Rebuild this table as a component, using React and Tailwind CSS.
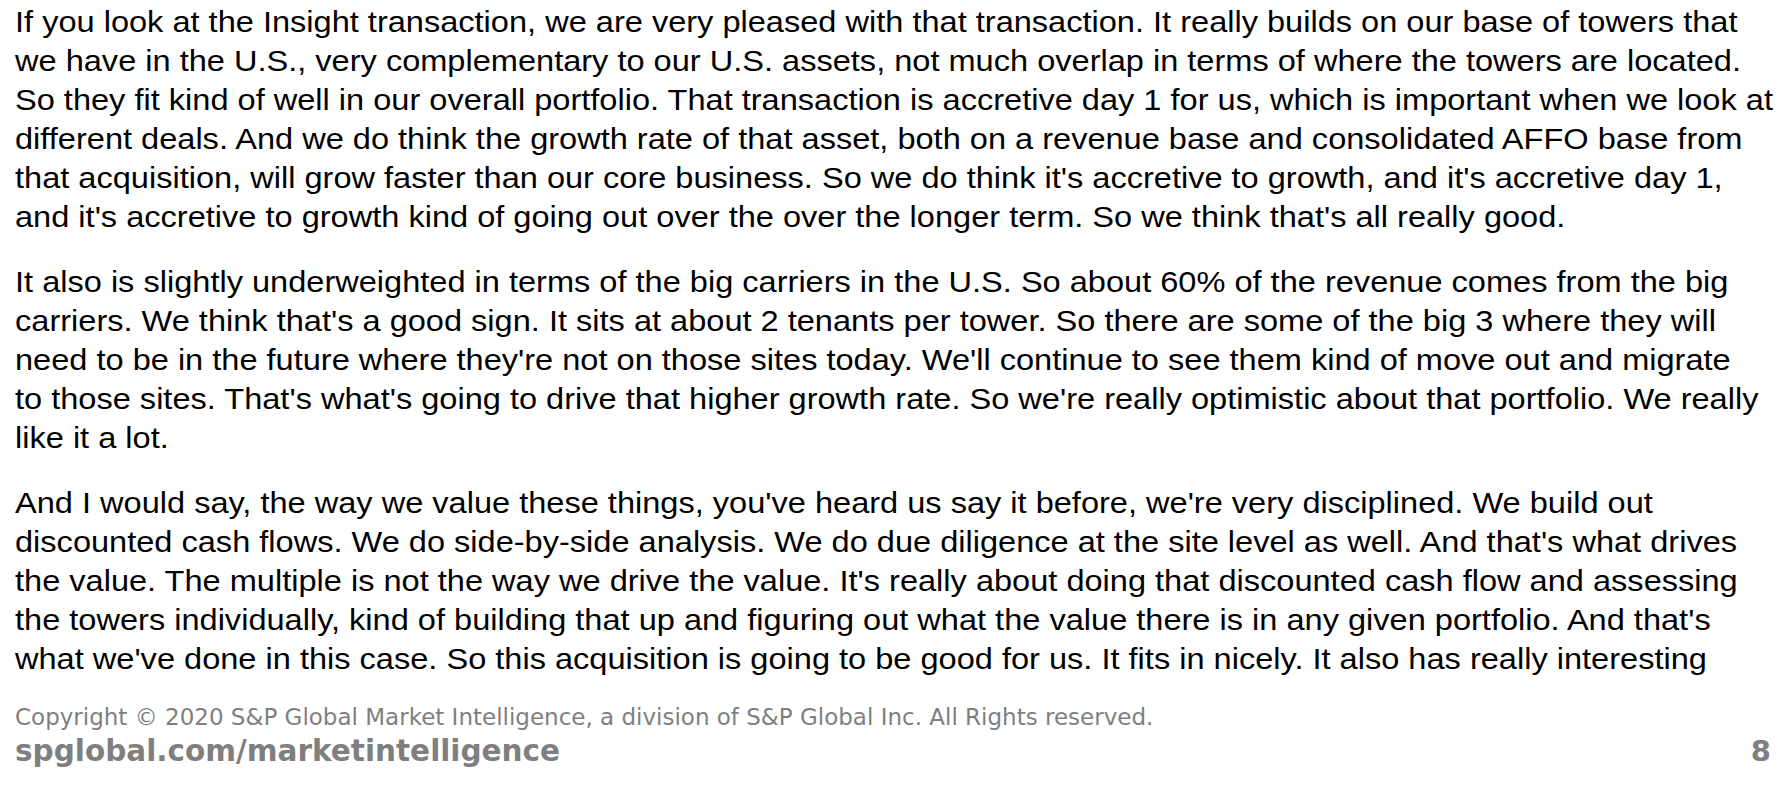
const paragraphs = [
  [
    'If you look at the Insight transaction, we are very pleased with that transaction. It really builds on our base of towers that',
    'we have in the U.S., very complementary to our U.S. assets, not much overlap in terms of where the towers are located.',
    'So they fit kind of well in our overall portfolio. That transaction is accretive day 1 for us, which is important when we look at',
    'different deals. And we do think the growth rate of that asset, both on a revenue base and consolidated AFFO base from',
    "that acquisition, will grow faster than our core business. So we do think it's accretive to growth, and it's accretive day 1,",
    "and it's accretive to growth kind of going out over the over the longer term. So we think that's all really good.",
  ],
  [
    'It also is slightly underweighted in terms of the big carriers in the U.S. So about 60% of the revenue comes from the big',
    "carriers. We think that's a good sign. It sits at about 2 tenants per tower. So there are some of the big 3 where they will",
    "need to be in the future where they're not on those sites today. We'll continue to see them kind of move out and migrate",
    "to those sites. That's what's going to drive that higher growth rate. So we're really optimistic about that portfolio. We really",
    'like it a lot.',
  ],
  [
    "And I would say, the way we value these things, you've heard us say it before, we're very disciplined. We build out",
    "discounted cash flows. We do side-by-side analysis. We do due diligence at the site level as well. And that's what drives",
    "the value. The multiple is not the way we drive the value. It's really about doing that discounted cash flow and assessing",
    "the towers individually, kind of building that up and figuring out what the value there is in any given portfolio. And that's",
    "what we've done in this case. So this acquisition is going to be good for us. It fits in nicely. It also has really interesting",
  ],
]

export default function App() {
  return (
    <div className="w-[1791px] h-[785px] bg-white overflow-hidden flex flex-col px-[15px] pt-[2px]">
      {/* Transcript body, slightly stretched like the source PDF render */}
      <div className="flex flex-col gap-[26px] origin-left scale-x-[1.085] text-black text-[30px] leading-[39px] font-['Liberation_Sans',Arial,sans-serif]">
        {paragraphs.map((lines, i) => (
          <p key={i}>
            {lines.map((line, j) => (
              <span key={j} className="block whitespace-nowrap">
                {line}
              </span>
            ))}
          </p>
        ))}
      </div>

      {/* Footer */}
      <div className="mt-[23px] flex items-end justify-between text-[#7f7f7f] font-['DejaVu_Sans',Verdana,sans-serif]">
        <div className="flex flex-col">
          <span className="text-[23px] leading-[32px]">
            Copyright © 2020 S&amp;P Global Market Intelligence, a division of S&amp;P Global Inc. All Rights reserved.
          </span>
          <span className="text-[29.5px] leading-[36px] font-bold">spglobal.com/marketintelligence</span>
        </div>
        <span className="text-[29px] leading-[36px] font-bold pr-[5px]">8</span>
      </div>
    </div>
  )
}
